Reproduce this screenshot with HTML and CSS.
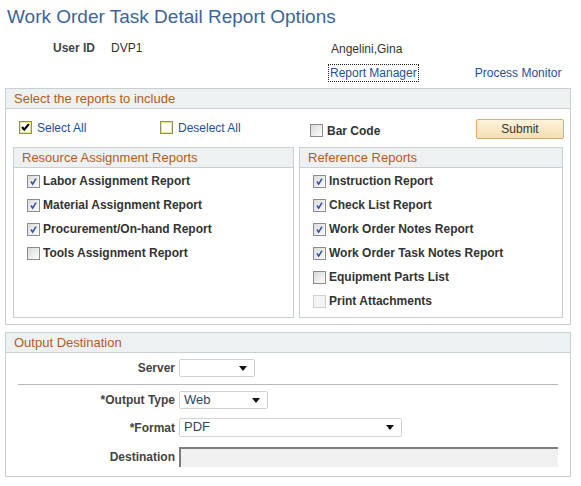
FILE: index.html
```html
<!DOCTYPE html>
<html lang="en">
    <head>
        <meta charset="utf-8">
        <title>Work Order Task Detail Report Options</title>
        <link rel="stylesheet" href="styles.css">
    </head>
    <body>
        <h1 class="page-title">Work Order Task Detail Report Options</h1>

        <div class="user-row">
            <span class="user-label">User ID</span>
            <span class="user-id">DVP1</span>
            <span class="user-name">Angelini,Gina</span>
        </div>
        <div class="links-row">
            <a class="link focused" href="#">Report Manager</a>
            <a class="link monitor" href="#">Process Monitor</a>
        </div>

        <div class="group">
            <div class="group-head">Select the reports to include</div>
            <div class="options-row">
                <span class="opt opt-select">
                    <span class="cb cb-yellow"><svg viewBox="0 0 13 13"><path d="M2.5 6 L5 9 L10.5 2.5" /></svg></span>
                    <a class="link" href="#">Select All</a>
                </span>
                <span class="opt opt-deselect">
                    <span class="cb cb-yellow"></span>
                    <a class="link" href="#">Deselect All</a>
                </span>
                <span class="opt opt-barcode">
                    <span class="cb"></span>
                    <span class="bold">Bar Code</span>
                </span>
                <button class="submit">Submit</button>
            </div>

            <div class="columns">
                <div class="inner inner-left">
                    <div class="group-head">Resource Assignment Reports</div>
                    <div class="checks">
                        <label class="check-row"><span class="cb on"><svg viewBox="0 0 13 13"><path d="M3.5 6.5 L5.5 9.5 L9.5 3" /></svg></span>Labor Assignment Report</label>
                        <label class="check-row"><span class="cb on"><svg viewBox="0 0 13 13"><path d="M3.5 6.5 L5.5 9.5 L9.5 3" /></svg></span>Material Assignment Report</label>
                        <label class="check-row"><span class="cb on"><svg viewBox="0 0 13 13"><path d="M3.5 6.5 L5.5 9.5 L9.5 3" /></svg></span>Procurement/On-hand Report</label>
                        <label class="check-row"><span class="cb"></span>Tools Assignment Report</label>
                    </div>
                </div>
                <div class="inner inner-right">
                    <div class="group-head">Reference Reports</div>
                    <div class="checks">
                        <label class="check-row"><span class="cb on"><svg viewBox="0 0 13 13"><path d="M3.5 6.5 L5.5 9.5 L9.5 3" /></svg></span>Instruction Report</label>
                        <label class="check-row"><span class="cb on"><svg viewBox="0 0 13 13"><path d="M3.5 6.5 L5.5 9.5 L9.5 3" /></svg></span>Check List Report</label>
                        <label class="check-row"><span class="cb on"><svg viewBox="0 0 13 13"><path d="M3.5 6.5 L5.5 9.5 L9.5 3" /></svg></span>Work Order Notes Report</label>
                        <label class="check-row"><span class="cb on"><svg viewBox="0 0 13 13"><path d="M3.5 6.5 L5.5 9.5 L9.5 3" /></svg></span>Work Order Task Notes Report</label>
                        <label class="check-row"><span class="cb"></span>Equipment Parts List</label>
                        <label class="check-row"><span class="cb off"></span>Print Attachments</label>
                    </div>
                </div>
            </div>
        </div>

        <div class="group group-output">
            <div class="group-head">Output Destination</div>
            <div class="field-row row-server">
                <span class="field-label">Server</span>
                <span class="dropdown w-server"></span>
            </div>
            <div class="divider"></div>
            <div class="field-row row-type">
                <span class="field-label">*Output Type</span>
                <span class="dropdown w-type">Web</span>
            </div>
            <div class="field-row row-format">
                <span class="field-label">*Format</span>
                <span class="dropdown w-format">PDF</span>
            </div>
            <div class="field-row row-dest">
                <span class="field-label">Destination</span>
                <span class="dest"></span>
            </div>
        </div>
    </body>
</html>
```

FILE: styles.css
```css
body {
    margin: 0;
    font-family: "Liberation Sans", Arial, sans-serif;
    font-size: 12px;
    color: #333;
}
.page-title {
    margin: 0;
    padding: 7px 0 0 7px;
    font-size: 19px;
    font-weight: normal;
    line-height: 20px;
    color: #3c659b;
}
.bold {
    font-weight: bold;
}
.link {
    color: #1d4f9c;
    text-decoration: none;
}

/* user info */
.user-row {
    display: flex;
    margin-top: 14px;
    padding-left: 53px;
    line-height: 14px;
}
.user-label {
    width: 58px;
    font-weight: bold;
    color: #444;
}
.user-id {
    width: 220px;
}
.user-name {
    padding-top: 1px;
}
.links-row {
    display: flex;
    margin-top: 8px;
    padding-left: 328px;
    line-height: 14px;
}
.links-row .focused {
    border: 1px dotted #222;
    padding: 1px;
}
.links-row .monitor {
    margin-left: 56px;
    padding-top: 2px;
}

/* group boxes */
.group {
    margin: 6px 0 0 5px;
    width: 564px;
    border: 1px solid #c9d0d4;
    padding-bottom: 6px;
}
.group-head {
    height: 19px;
    line-height: 19px;
    padding-left: 8px;
    background: #eef1f2;
    border-bottom: 1px solid #c9d0d4;
    color: #b65a22;
    font-size: 13px;
}
.options-row {
    display: flex;
    align-items: center;
    height: 20px;
    margin-top: 10px;
    padding-left: 13px;
}
.opt {
    display: flex;
    align-items: center;
}
.opt .cb {
    margin-right: 5px;
}
.opt-select {
    width: 141px;
    padding-bottom: 3px;
}
.opt-deselect {
    width: 150px;
    padding-bottom: 3px;
}
.opt-barcode {
    width: 166px;
    padding-top: 3px;
}
.opt-barcode .cb {
    margin-right: 4px;
}
.submit {
    width: 88px;
    height: 20px;
    padding: 0;
    border: 1px solid #e0a872;
    border-radius: 2px;
    background: linear-gradient(#fdf3de, #f8deb0);
    font-family: "Liberation Sans", Arial, sans-serif;
    font-size: 12px;
    color: #333;
}

.columns {
    display: flex;
    gap: 5px;
    margin-top: 8px;
    padding-left: 7px;
}
.inner {
    border: 1px solid #c9d0d4;
}
.inner-left {
    width: 279px;
}
.inner-right {
    width: 262px;
}
.checks {
    padding: 1px 0 4px 13px;
}
.check-row {
    display: flex;
    align-items: center;
    height: 24px;
    font-weight: bold;
    color: #333;
}
.check-row .cb {
    margin-right: 3px;
}

/* checkboxes */
.cb {
    display: inline-block;
    box-sizing: border-box;
    width: 13px;
    height: 13px;
    border: 1px solid #8c8c8c;
    background: linear-gradient(135deg, #d9d9d9, #fdfdfd);
    flex: none;
}
.cb svg {
    display: block;
    width: 11px;
    height: 11px;
    fill: none;
    stroke: #3050a6;
    stroke-width: 1.8;
}
.cb.on {
    background: linear-gradient(135deg, #dcdcdc, #fafafa);
}
.cb.off {
    border-color: #d0d0d0;
    background: #f4f4f4;
}
.cb-yellow {
    border-color: #8c8c6e;
    background: #fff;
    box-shadow: inset 0 0 0 1px #ede48a;
}
.cb-yellow svg {
    stroke: #000;
    stroke-width: 2.6;
}

/* output destination */
.group-output {
    margin-top: 7px;
    padding-bottom: 9px;
}
.field-row {
    display: flex;
    align-items: center;
}
.row-server {
    margin-top: 6px;
}
.row-type {
    margin-top: 6px;
}
.row-format {
    margin-top: 9px;
}
.row-dest {
    margin-top: 10px;
}
.field-label {
    width: 169px;
    padding-right: 4px;
    text-align: right;
    font-weight: bold;
    color: #444;
}
.dropdown {
    position: relative;
    box-sizing: border-box;
    height: 18px;
    line-height: 16px;
    padding-left: 4px;
    border: 1px solid #cfd3d6;
    border-radius: 2px;
    background: #fff;
    font-size: 13px;
    color: #34455c;
}
.dropdown::after {
    content: "";
    position: absolute;
    right: 7px;
    top: 6px;
    border-left: 4px solid transparent;
    border-right: 4px solid transparent;
    border-top: 5px solid #111;
}
.w-server {
    width: 76px;
}
.w-type {
    width: 89px;
}
.w-format {
    width: 223px;
    height: 19px;
}
.divider {
    margin: 7px 12px 0 12px;
    border-top: 1px solid #b8b8b8;
}
.dest {
    box-sizing: border-box;
    width: 379px;
    height: 20px;
    border-top: 2px solid #7d7d7d;
    border-left: 2px solid #7d7d7d;
    background: #f0f0f0;
}
```
